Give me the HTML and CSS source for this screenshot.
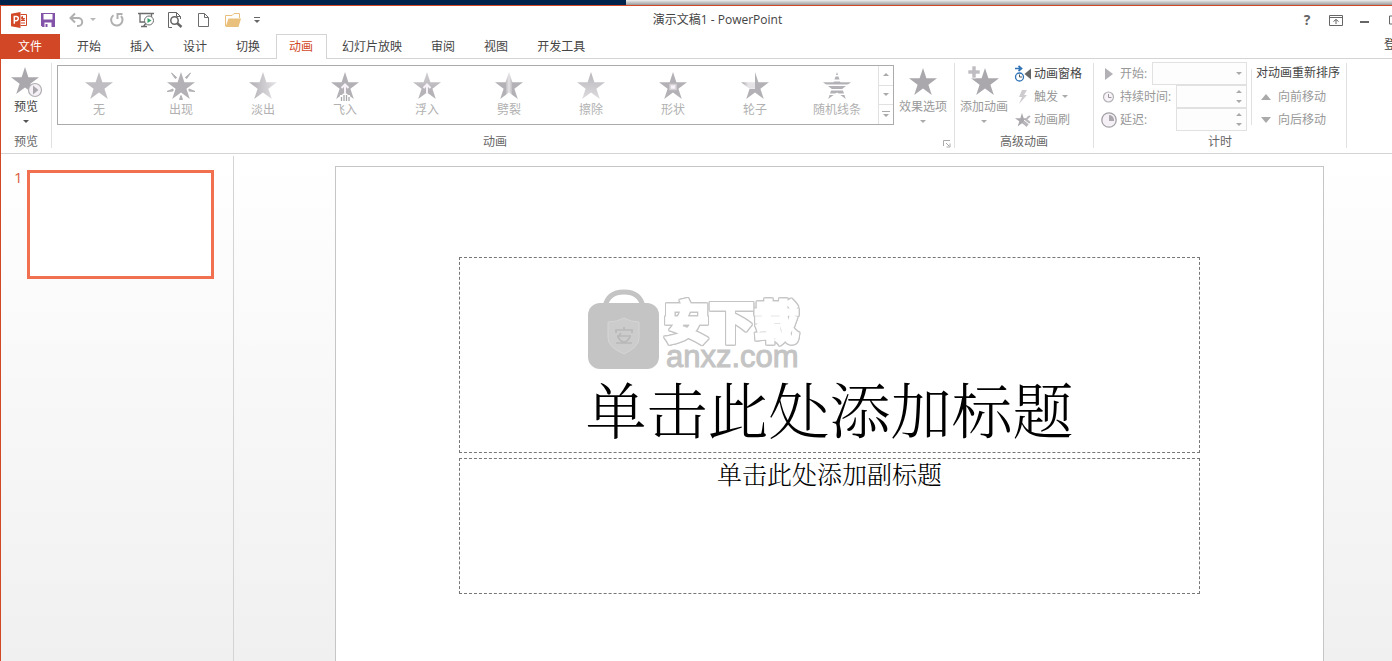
FILE: index.html
```html
<!DOCTYPE html>
<html lang="zh-CN">
<head>
<meta charset="utf-8">
<title>演示文稿1 - PowerPoint</title>
<link rel="stylesheet" href="styles.css">
</head>
<body>
<svg class="defs" aria-hidden="true">
  <defs>
    <linearGradient id="fade-side"><stop offset=".1" stop-color="#b6b4b8"/><stop offset="1" stop-color="#e6e3e7"/></linearGradient>
    <linearGradient id="fade-right"><stop offset=".15" stop-color="#b3b1b5"/><stop offset=".5" stop-color="#e6e3e7"/></linearGradient>
    <linearGradient id="fade-up" x2="0" y2="1"><stop offset="0" stop-color="#d2cfd3"/><stop offset=".7" stop-color="#b5b3b7"/></linearGradient>
    <linearGradient id="fade-wipe" x2="0" y2="1"><stop offset="0" stop-color="#b8b6ba"/><stop offset="1" stop-color="#dedbdf"/></linearGradient>
    <linearGradient id="fade-split"><stop offset=".38" stop-color="#b3b1b5"/><stop offset=".4" stop-color="#c4c1c5"/><stop offset=".5" stop-color="#e6e3e7"/><stop offset=".6" stop-color="#c4c1c5"/><stop offset=".62" stop-color="#b3b1b5"/></linearGradient>
    <path id="star" d="M14 0l3.400 10.300H28l-8.600 6.400L22.800 27 14 20.600 5.200 27l3.400-10.300L0 10.300h10.600z"/>
    <clipPath id="bars"><path d="M0 0h28v3H0zM0 4.500h28v3H0zM0 9.500h28v3H0zM0 14h28v3H0zM0 18.500h28v3H0zM0 23h28v4H0z"/></clipPath>
    <clipPath id="left-half"><path d="M0 0h14v17H0z"/></clipPath>
    <clipPath id="solid-part"><path d="M14 0h14v28H0V17h14z"/></clipPath>
  </defs>
</svg>
<div class="desktop-strip"><div class="strip-window"></div></div>
<div class="app">
  <header class="titlebar">
    <div class="quick">
      <button class="tool" aria-label="PowerPoint"><svg width="16" height="16" viewBox="0 0 16 16"><path d="M9.500 2.500H15.500v11H9.500" fill="#fff" stroke="#d24726"/><path d="M10 8.500h4M10 11h4" stroke="#d24726"/><path d="M12 4a2 2 0 1 0 2 2h-2z" fill="#d24726"/><path d="M0 1.800L9.500 0v16L0 14.200z" fill="#d24726"/><path d="M3.300 11.700V4.500h1.900a1.900 1.900 0 0 1 0 4.200H3.500" fill="none" stroke="#fff" stroke-width="1.500"/></svg></button>
      <button class="tool" aria-label="保存"><svg width="16" height="16" viewBox="0 0 16 16"><path d="M1 1h14v14H2.500L1 13.500z" fill="#8253a8"/><path d="M3.500 2h9v5.500h-9zM4.500 10.500h7V15h-7z" fill="#fff"/><path d="M5.500 12h2v3h-2z" fill="#8253a8"/></svg></button>
      <button class="tool" aria-label="撤消"><svg width="16" height="16" viewBox="0 0 16 16"><path d="M1.500 6h7.700a4 4 0 0 1 0 8H8M6 1.500L1.500 6 6 10.500" fill="none" stroke="#b0b0b0" stroke-width="2"/></svg></button>
      <button class="tool undo-menu" aria-label="撤消选项"><svg width="6" height="4" viewBox="0 0 6 4"><path d="M0 0h6L3 3z" fill="#b8b8b8"/></svg></button>
      <button class="tool" aria-label="重复"><svg width="16" height="16" viewBox="0 0 16 16"><path d="M4.500 3.200A5.700 5.700 0 1 0 12 4M8.500 7V2H13.500" fill="none" stroke="#b0b0b0" stroke-width="2"/></svg></button>
      <button class="tool" aria-label="从头开始放映"><svg width="16" height="16" viewBox="0 0 16 16"><path d="M0 1.500h16M2 2v8h5M8 11l-2.500 3.500M3 14.500h6M13.500 2v3" fill="none" stroke="#6c6c6c" stroke-width="1.300"/><circle cx="11" cy="8.500" r="4.500" fill="#fff" stroke="#6c6c6c"/><path d="M9.500 6l4 2.500-4 2.500z" fill="#39a36d"/></svg></button>
      <button class="tool" aria-label="打印预览"><svg width="16" height="16" viewBox="0 0 16 16"><path d="M5 15.500H1.500v-15h8l4 4V7M9.500.5v4h4" fill="none" stroke="#666"/><circle cx="7.500" cy="8.500" r="3.700" fill="#fff" stroke="#666" stroke-width="1.500"/><path d="M10 11l4.500 4" stroke="#666" stroke-width="2.500"/></svg></button>
      <button class="tool" aria-label="新建"><svg width="16" height="16" viewBox="0 0 16 16"><path d="M2.500 1.500h6l4 4v9h-10zM8.500 1.500v4h4" fill="none" stroke="#6c6c6c"/></svg></button>
      <button class="tool" aria-label="打开"><svg width="16" height="16" viewBox="0 0 16 16"><path d="M.5 14V3.500H7l2-2h5.500V6" fill="#fff" stroke="#e9bf7b"/><path d="M3.500 6.500H16l-2.500 8.500H.5z" fill="#e9c07c"/></svg></button>
      <button class="tool more" aria-label="自定义快速访问工具栏"><svg width="6" height="7" viewBox="0 0 6 7"><path d="M0 .5h6" stroke="#666"/><path d="M0 3h6L3 6z" fill="#666"/></svg></button>
    </div>
    <h1 class="title">演示文稿1 - PowerPoint</h1>
    <div class="window-buttons">
      <button class="tool help" aria-label="帮助">?</button>
      <button class="tool" aria-label="功能区显示选项"><svg width="14" height="11" viewBox="0 0 14 11"><path d="M.5.5h13v10H.5zM1 2.500h12M7 9V4.500M4.500 6.500L7 4.500l2.500 2" fill="none" stroke="#666"/></svg></button>
      <button class="tool" aria-label="最小化"><svg width="10" height="8" viewBox="0 0 10 8"><path d="M0 6h9" stroke="#666" stroke-width="2"/></svg></button>
      <button class="tool" aria-label="最大化"><svg width="10" height="10" viewBox="0 0 10 10"><path d="M.5 1h9v8h-9z" fill="none" stroke="#666"/></svg></button>
    </div>
  </header>

  <nav class="tabs">
    <button class="tab file">文件</button>
    <button class="tab">开始</button>
    <button class="tab">插入</button>
    <button class="tab">设计</button>
    <button class="tab">切换</button>
    <button class="tab active">动画</button>
    <button class="tab">幻灯片放映</button>
    <button class="tab">审阅</button>
    <button class="tab">视图</button>
    <button class="tab">开发工具</button>
    <a class="signin" href="#">登录</a>
  </nav>

  <section class="ribbon">
    <div class="group preview">
      <div class="group-body">
        <button class="big dark"><svg width="32" height="32" viewBox="0 0 32 32"><use href="#star" x="1" y="0" fill="#aaa8ac"/><circle cx="25" cy="23" r="6.500" fill="#f4f0f5" stroke="#b0aeb2" stroke-width="1.200"/><path d="M23 18.500l5.500 4.500-5.500 4.500z" fill="#aaa8ac"/></svg>预览<svg class="caret" width="6" height="4" viewBox="0 0 6 4"><path d="M0 0h6L3 3z"/></svg></button>
      </div>
      <div class="group-label">预览</div>
    </div>

    <div class="group animation">
      <div class="group-body">
        <div class="gallery">
          <button class="effect" disabled><svg width="32" height="32" viewBox="-2 -1 32 32"><use href="#star" fill="#bfbdc1"/></svg>无</button>
          <button class="effect" disabled><svg width="32" height="32" viewBox="-2 -1 32 32"><use href="#star" fill="#b3b1b5"/><path d="M4.500 1l3.700 5.500 1.500-1zM23.500 1l-3.700 5.500-1.500-1zM0 19.500l6-2.500v2zM28 19.500L22 17v2zM12.500 27.500L14 23.500l1.500 4z" fill="#b3b1b5" stroke="#b3b1b5"/></svg>出现</button>
          <button class="effect" disabled><svg width="32" height="32" viewBox="-2 -1 32 32"><use href="#star" fill="url(#fade-side)"/></svg>淡出</button>
          <button class="effect" disabled><svg width="32" height="32" viewBox="-2 -1 32 32"><use href="#star" fill="#b3b1b5"/><path d="M14 22v-9M10.500 16L14 12.500l3.500 3.500" fill="none" stroke="#f7f3f8" stroke-width="2"/><path d="M9 23h10v7H9z" fill="#fff"/><path d="M10.500 25v4M13 23v6M15.500 23v6M18 25v4" stroke="#aaa8ac" stroke-width="1.300"/></svg>飞入</button>
          <button class="effect" disabled><svg width="32" height="32" viewBox="-2 -1 32 32"><use href="#star" fill="url(#fade-up)"/><path d="M14 22v-9M10.500 16L14 12.500l3.500 3.500" fill="none" stroke="#f7f3f8" stroke-width="2"/></svg>浮入</button>
          <button class="effect" disabled><svg width="32" height="32" viewBox="-2 -1 32 32"><use href="#star" fill="url(#fade-split)"/></svg>劈裂</button>
          <button class="effect" disabled><svg width="32" height="32" viewBox="-2 -1 32 32"><use href="#star" fill="url(#fade-wipe)"/></svg>擦除</button>
          <button class="effect" disabled><svg width="32" height="32" viewBox="-2 -1 32 32"><use href="#star" fill="#b3b1b5"/><path d="M11 12.500h6v5h-6z" fill="#f7f3f8" stroke="#d4d1d5" stroke-width="1.500"/></svg>形状</button>
          <button class="effect" disabled><svg width="32" height="32" viewBox="-2 -1 32 32"><use href="#star" fill="#b3b1b5" clip-path="url(#solid-part)"/><g clip-path="url(#left-half)"><path d="M14 10.300H0l8.600 6.400H14z" fill="url(#fade-right)"/></g></svg>轮子</button>
          <button class="effect" disabled><svg width="32" height="32" viewBox="-2 -1 32 32"><use href="#star" fill="#b3b1b5" clip-path="url(#bars)"/></svg>随机线条</button>
          <div class="scroller">
            <button disabled aria-label="上一行"><svg width="6" height="4" viewBox="0 0 6 4"><path d="M0 3h6L3 0z"/></svg></button>
            <button disabled aria-label="下一行"><svg width="6" height="4" viewBox="0 0 6 4"><path d="M0 0h6L3 3z"/></svg></button>
            <button disabled aria-label="其他"><svg width="8" height="7" viewBox="0 0 8 7"><path d="M0 0h8v1H0zM1 3h6L4 6z"/></svg></button>
          </div>
        </div>
        <button class="big" disabled><svg width="32" height="32" viewBox="0 0 32 32"><use href="#star" x="2" y="1" fill="#aaa8ac"/></svg>效果选项<svg class="caret" width="6" height="4" viewBox="0 0 6 4"><path d="M0 0h6L3 3z"/></svg></button>
      </div>
      <div class="group-label">动画<button class="launcher" disabled aria-label="更多动画设置"><svg width="8" height="8" viewBox="0 0 8 8"><path d="M.5 6V.5H7M3 3l3 3M7 3.500V7H3.500" fill="none" stroke="#aaa"/></svg></button></div>
    </div>

    <div class="group advanced">
      <div class="group-body">
        <button class="big" disabled><svg width="32" height="32" viewBox="0 0 32 32"><use href="#star" x="3" y="1" fill="#aaa8ac"/><path d="M0 3h4V-1h4v4h4v4H8v4H4V7H0z" fill="#bfbdc1" stroke="#fff" stroke-width=".6"/></svg>添加动画<svg class="caret" width="6" height="4" viewBox="0 0 6 4"><path d="M0 0h6L3 3z"/></svg></button>
        <div class="rows">
          <button class="row dark"><svg width="17" height="16" viewBox="0 0 17 16"><path d="M0 2.500h5M3.500 0L6.500 2.500l-3 2.500" fill="none" stroke="#2f73b7" stroke-width="1.700"/><circle cx="4.500" cy="11" r="4" fill="#fff" stroke="#2f73b7" stroke-width="1.300"/><path d="M4.500 8.500V11H7" fill="none" stroke="#555"/><path d="M16 2.500v11L9.500 8z" fill="#666"/></svg>动画窗格</button>
          <button class="row" disabled><svg width="17" height="16" viewBox="0 0 17 16"><path d="M7 1h5L9 6h3L4 15l3-7H4z" fill="#cfccd0"/></svg>触发<svg class="caret" width="6" height="4" viewBox="0 0 6 4"><path d="M0 0h6L3 3z"/></svg></button>
          <button class="row" disabled><svg width="17" height="16" viewBox="0 0 17 16"><use href="#star" transform="translate(0 1) scale(.5)" fill="#aaa8ac"/><path d="M7.500 10.500l4-4 4 3.500-4 5z" fill="#b9b7bb"/><path d="M9 8l5 4" stroke="#fff"/><path d="M12 6l3-2" stroke="#b9b7bb" stroke-width="2"/></svg>动画刷</button>
        </div>
      </div>
      <div class="group-label">高级动画</div>
    </div>

    <div class="group timing">
      <div class="group-body">
        <div class="fields">
          <div class="field"><svg width="16" height="16" viewBox="0 0 16 16"><path d="M4 2l8 6-8 6z" fill="#b3b1b5"/></svg><label for="start">开始:</label><span class="select-box"><select id="start" disabled><option></option></select><svg class="caret" width="6" height="4" viewBox="0 0 6 4"><path d="M0 0h6L3 3z"/></svg></span></div>
          <div class="field"><svg width="16" height="16" viewBox="0 0 16 16"><circle cx="7.500" cy="8" r="5" fill="#f7f3f8" stroke="#b3b1b5" stroke-width="1.200"/><path d="M7.500 5v3.500h3" fill="none" stroke="#999"/></svg><label for="duration">持续时间:</label><span class="spin"><input id="duration" type="text" disabled><svg width="6" height="13" viewBox="0 0 6 13"><path d="M0 3h6L3 0zM0 10h6l-3 3z"/></svg></span></div>
          <div class="field"><svg width="16" height="16" viewBox="0 0 16 16"><circle cx="8" cy="8" r="7.200" fill="#f4f0f5" stroke="#a3a1a5" stroke-width="1.300"/><path d="M8 3a5 5 0 0 1 5 5v1H8z" fill="#aaa8ac"/></svg><label for="delay">延迟:</label><span class="spin"><input id="delay" type="text" disabled><svg width="6" height="13" viewBox="0 0 6 13"><path d="M0 3h6L3 0zM0 10h6l-3 3z"/></svg></span></div>
        </div>
        <div class="reorder">
          <div class="reorder-title">对动画重新排序</div>
          <button class="row" disabled><svg width="10" height="6" viewBox="0 0 10 6"><path d="M0 6h10L5 0z" fill="#aaa"/></svg>向前移动</button>
          <button class="row" disabled><svg width="10" height="6" viewBox="0 0 10 6"><path d="M0 0h10L5 6z" fill="#aaa"/></svg>向后移动</button>
        </div>
      </div>
      <div class="group-label">计时</div>
    </div>
  </section>

  <main class="workspace">
    <aside class="thumbs">
      <span class="number">1</span>
      <button class="thumb" aria-label="幻灯片 1"></button>
    </aside>
    <section class="editor">
      <article class="slide">
        <div class="placeholder heading">单击此处添加标题</div>
        <div class="placeholder subtitle">单击此处添加副标题</div>
        <div class="watermark">
          <svg width="71" height="81" viewBox="0 0 71 81"><path d="M17 18C19 7 26 3 36 3s17 4 19 15" fill="none" stroke="#c4c4c4" stroke-width="5"/><rect y="14" width="71" height="66" rx="12" fill="#c4c4c4"/><path d="M20 33q9 0 16-4 7 4 15 4v16q0 9-15 16Q20 58 20 49z" fill="#cbcccb" stroke="#d5d5d5"/><path d="M28 44v-3h16v3M36 38v3M29 47h14M33 44l-3 4q3 5 6 5t6-5M28 54h16" fill="none" stroke="#b8b8b8" stroke-width="1.700"/></svg>
          <div class="mark-text"><span class="mark-name">安下载</span><span class="mark-site">anxz.com</span></div>
        </div>
      </article>
    </section>
  </main>
</div>
</body>
</html>
```

FILE: styles.css
```css
* { box-sizing: border-box; }
body {
  margin: 0;
  height: 100vh;
  display: flex;
  flex-direction: column;
  overflow: hidden;
  background: #fff;
  color: #444;
  font: 12px/16px "Open Sans", "Noto Sans CJK SC", sans-serif;
}
button, input, select { font: inherit; color: inherit; }
button { padding: 0; border: 0; background: none; white-space: nowrap; }
svg { display: block; flex: none; overflow: visible; }
.defs { position: absolute; width: 0; height: 0; }

.desktop-strip { flex: none; height: 5px; display: flex; background: #00234b; }
.strip-window { width: 55%; margin-left: auto; background: linear-gradient(#eee, #999); }
.app {
  flex: 1;
  min-height: 0;
  display: flex;
  flex-direction: column;
  border: solid #d24726;
  border-width: 1px 0 0 1px;
}

.titlebar { flex: none; height: 28px; display: flex; align-items: center; }
.quick { display: flex; align-items: center; gap: 13px; padding-left: 10px; }
.tool { display: flex; align-items: center; justify-content: center; min-width: 16px; height: 16px; }
.undo-menu { min-width: 7px; margin-left: -9px; }
.more { min-width: 6px; }
.title { flex: 1; margin: 0; padding-right: 124px; text-align: center; font-size: 12px; font-weight: 400; }
.window-buttons { display: flex; gap: 13px; margin-right: -10px; }
.help { color: #666; font-size: 14px; font-weight: 700; }

.tabs { flex: none; height: 25px; display: flex; gap: 2px; border-bottom: 1px solid #d4d4d4; }
.tab { height: 25px; padding: 0 13px 1px 12px; border: 1px solid transparent; border-bottom: 0; }
.file { width: 59px; margin-right: 2px; background: #d24726; color: #fff; }
.active { border-color: #d4d4d4; background: #fff; color: #d24726; }
.signin { margin: 3px -16px 0 auto; color: #444; text-decoration: none; white-space: nowrap; }

.ribbon { flex: none; display: flex; height: 95px; padding: 4px 0 5px; border-bottom: 1px solid #d4d4d4; }
.group { flex: none; display: flex; flex-direction: column; border-right: 1px solid #e1e1e1; }
.group-body { flex: 1; min-height: 0; display: flex; }
.group-label { position: relative; line-height: 12px; text-align: center; color: #666; }
.preview { width: 51px; }
.preview .group-body { justify-content: center; }
.animation { width: 903px; }
.animation .group-label { padding-right: 16px; }
.advanced { width: 139px; }
.timing { width: 253px; }
.big { display: flex; flex-direction: column; align-items: center; width: 58px; height: 60px; margin-top: 4px; color: #999; }
.big .caret { margin-top: 5px; }
.dark, .big.dark { color: #444; }
.caret { fill: #aaa; }
.dark .caret { fill: #555; }
.launcher { position: absolute; right: 3px; bottom: 0; }

.gallery { display: flex; width: 837px; height: 60px; margin: 2px 0 0 5px; border: 1px solid #ababab; }
.effect { flex: 1; display: flex; flex-direction: column; align-items: center; padding-top: 5px; line-height: 14px; color: #b1b1b1; }
.scroller { width: 15px; display: flex; flex-direction: column; border-left: 1px solid #e1e1e1; fill: #aaa; }
.scroller button { flex: 1; display: flex; align-items: center; justify-content: center; }
.scroller button + button { border-top: 1px solid #e1e1e1; }

.rows { flex: 1; margin: -1px 0 0 2px; }
.row { display: flex; align-items: center; gap: 2px; height: 23px; color: #999; }
.row.dark { color: #444; }
.row .caret { margin-left: 2px; }

.fields { width: 146px; margin: -1px 0 0 7px; }
.field { display: flex; align-items: center; gap: 3px; height: 23px; color: #999; }
.select-box, .spin { position: relative; margin-left: auto; }
.select-box { width: 95px; }
.spin { width: 71px; }
.field select, .field input { display: block; width: 100%; height: 23px; border: 1px solid #e1e1e1; background: #fdfdfd; appearance: none; opacity: 1; }
.select-box svg, .spin svg { position: absolute; right: 5px; fill: #aaa; }
.select-box svg { top: 10px; }
.spin svg { top: 5px; }
.reorder { height: 56px; margin: 6px 0 0 4px; padding-left: 4px; border-left: 1px solid #e1e1e1; }
.reorder-title { height: 16px; line-height: 8px; white-space: nowrap; }
.reorder .row { gap: 7px; padding-left: 5px; }

.workspace { flex: 1; min-height: 0; display: flex; background: linear-gradient(#fff, #f0f0f0); }
.thumbs { flex: none; width: 233px; margin-top: 2px; display: flex; align-items: flex-start; padding: 14px 19px 0 13px; border-right: 1px solid #d4d4d4; }
.number { width: 13px; color: #d9603f; font: 15px/14px "Open Sans", sans-serif; }
.thumb { flex: 1; height: 109px; border: 3px solid #f07050; background: #fff; }
.editor { flex: 1; display: flex; padding: 12px 68px 0 101px; }
.slide { position: relative; flex: 1; display: flex; flex-direction: column; align-items: center; gap: 5px; padding-top: 90px; border: 1px solid #c6c6c6; border-bottom: 0; background: #fff; color: #000; font-family: "Noto Serif CJK SC", "Noto Sans CJK SC", serif; font-weight: 300; }
.placeholder { width: 75%; border: 1px dashed #777; text-align: center; }
.heading { height: 196px; display: flex; align-items: flex-end; justify-content: center; padding-bottom: 10px; font-size: 61px; line-height: 68px; white-space: nowrap; }
.subtitle { height: 136px; font-size: 25px; line-height: 28px; }
.watermark { position: absolute; top: 122px; left: 252px; display: flex; gap: 5px; color: #c4c4c4; font-family: "Liberation Sans", "Noto Sans CJK SC", sans-serif; }
.mark-text { display: flex; flex-direction: column; padding-top: 14px; }
.mark-name {
  color: #fff;
  font-size: 45px;
  font-weight: 700;
  line-height: 42px;
  -webkit-text-stroke: 3px #fff;
  stroke-linejoin: round;
  filter: drop-shadow(1px 0 #c4c4c4) drop-shadow(-1px 0 #c4c4c4) drop-shadow(0 1px #c4c4c4) drop-shadow(0 -1px #c4c4c4);
}
.mark-site { margin-left: 2px; font-size: 31px; line-height: 24px; -webkit-text-stroke: 1px #c4c4c4; }
```
